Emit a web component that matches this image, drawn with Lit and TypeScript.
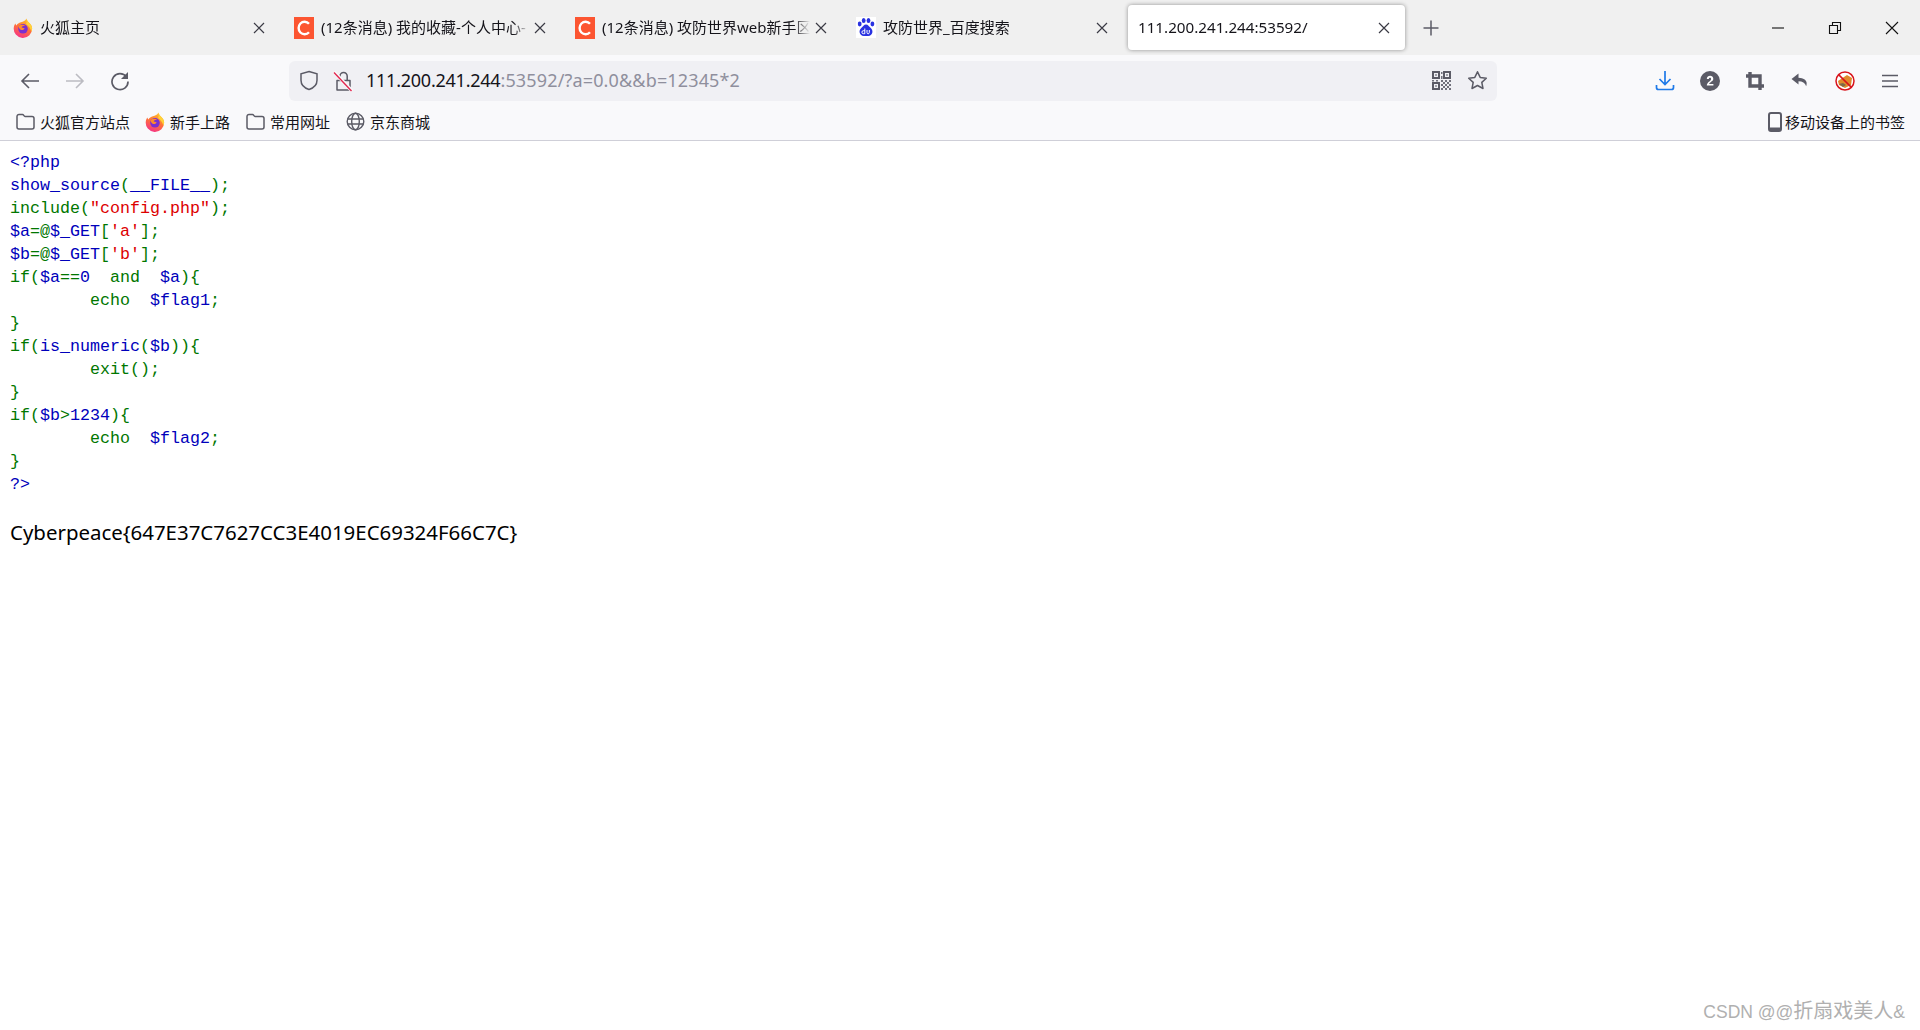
import { LitElement, html, css, svg } from "lit";
import { customElement } from "lit/decorators.js";

type Tok = [string, string];
const K = "k", D = "d", S = "s";
const CODE: Tok[][] = [
  [["<?php", D]],
  [["show_source", D], ["(", K], ["__FILE__", D], [");", K]],
  [["include", K], ["(", K], ['"config.php"', S], [");", K]],
  [["$a", D], ["=@", K], ["$_GET", D], ["[", K], ["'a'", S], ["];", K]],
  [["$b", D], ["=@", K], ["$_GET", D], ["[", K], ["'b'", S], ["];", K]],
  [["if(", K], ["$a", D], ["==", K], ["0", D], ["  and  ", K], ["$a", D], ["){", K]],
  [["        echo  ", K], ["$flag1", D], [";", K]],
  [["}", K]],
  [["if(", K], ["is_numeric", D], ["(", K], ["$b", D], ["))", K], ["{", K]],
  [["        exit", K], ["();", K]],
  [["}", K]],
  [["if(", K], ["$b", D], [">", K], ["1234", D], ["){", K]],
  [["        echo  ", K], ["$flag2", D], [";", K]],
  [["}", K]],
  [["?>", D]],
];

let gid = 0;
const firefox = () => {
  const id = `ff${gid++}`;
  return html`<svg class="ic" width="20" height="20" viewBox="0 0 20 20">
    <defs>
      <linearGradient id="${id}" x1="0.7" y1="0.1" x2="0.3" y2="1">
        <stop offset="0" stop-color="#ffb62e"/><stop offset="0.45" stop-color="#ff7139"/><stop offset="1" stop-color="#f5318a"/>
      </linearGradient>
    </defs>
    <path d="M13.5 0.5c.3 1.8 1.2 3 2.6 4.2 1.7 1.5 3 3.1 3 5.6a9.2 9.2 0 1 1-18.3-.9c.2-1.6.8-3 1.7-4 .1 1 .4 1.6 1 2.2.8-1.8 2.4-2.9 4.4-3.3 2.2-.5 4.5-1.500 5.600-3.800z" fill="url(#${id})"/>
    <path d="M13.500 .5c.3 1.800 1.200 3 2.600 4.200 1.700 1.500 3 3.100 3 5.600 0 1.200-.2 2.200-.7 3.200-.8-3.500-2.900-5.500-5.400-7.500 1-1.600 .8-3.900 .5-5.500z" fill="#ffd23a"/>
    <circle cx="10" cy="10.800" r="4.800" fill="#7b2fd0"/>
    <path d="M5.800 8.200c1.500-1.600 4.700-1.800 6.600-.4-1.900-.3-3.500.5-3.700 1.600l2.900.9c-.4 1.600-2.500 2.300-4 1.400-1.200-.7-1.900-2-1.800-3.500z" fill="#ff8a2b"/>
  </svg>`;
};
const csdn = () => html`<svg class="ic" width="20" height="22" viewBox="0 0 20 22">
  <rect width="20" height="22" fill="#fc5531"/>
  <path d="M15 6.700a6 6.300 0 1 0 0 8.600" fill="none" stroke="#fff" stroke-width="2.400"/>
</svg>`;
const baidu = () => html`<svg class="ic" width="20" height="21" viewBox="0 0 20 21">
  <rect width="20" height="21" fill="#fff"/>
  <g fill="#2932e1">
    <ellipse cx="3.700" cy="7" rx="1.900" ry="2.400"/>
    <ellipse cx="7.700" cy="3.400" rx="1.900" ry="2.500"/>
    <ellipse cx="12.500" cy="3.400" rx="1.900" ry="2.500"/>
    <ellipse cx="16.400" cy="7" rx="1.900" ry="2.400"/>
    <path d="M10 7.500c2.200 0 3 2 4.500 3.300 1.800 1.500 2.200 3.400 1.800 5-.5 2-2 3.200-4 3.200H7.700c-2 0-3.500-1.200-4-3.200-.4-1.600 0-3.500 1.800-5C7 9.500 7.800 7.500 10 7.500z"/>
  </g>
  <path d="M8.800 11.500v5.200M8.800 13.700H7.400a1.500 1.500 0 0 0 0 3h1.400M11 13v2.600c0 1.600 2.300 1.600 2.300 0V13" fill="none" stroke="#fff" stroke-width="1"/>
</svg>`;
const closeX = svg`<path d="M3 3l10 10M13 3L3 13" fill="none" stroke="currentColor" stroke-width="1.200"/>`;
const folder = html`<svg class="ic" width="19" height="19" viewBox="0 0 19 19"><path d="M1 4.500a2 2 0 0 1 2-2h3.600c1 0 1.300 1.900 2.400 1.900H16a2 2 0 0 1 2 2V15a2 2 0 0 1-2 2H3a2 2 0 0 1-2-2z" fill="none" stroke="#5b5b66" stroke-width="1.500"/></svg>`;
const globe = html`<svg class="ic" width="19" height="19" viewBox="0 0 19 19"><g fill="none" stroke="#5b5b66" stroke-width="1.400"><circle cx="9.500" cy="9.500" r="8.300"/><ellipse cx="9.500" cy="9.500" rx="3.800" ry="8.300"/><path d="M1.500 7h16M1.500 12h16"/></g></svg>`;

const TABS = [
  { icon: firefox, title: "火狐主页" },
  { icon: csdn, title: "(12条消息) 我的收藏-个人中心-" },
  { icon: csdn, title: "(12条消息) 攻防世界web新手区" },
  { icon: baidu, title: "攻防世界_百度搜索" },
  { icon: null, title: "111.200.241.244:53592/", active: true },
];

@customElement("app-root")
export class AppRoot extends LitElement {
  static styles = css`
    :host { display: block; height: 1030px; background: #fff; overflow: hidden; position: relative;
      font-family: "Noto Sans", "Noto Sans CJK SC", sans-serif; color: #15141a; }
    .ic { display: block; flex: none; }
    .tabbar { height: 55px; background: #f0f0f0; display: flex; align-items: flex-start; padding-left: 4px; gap: 4px; box-sizing: border-box; padding-top: 5px; }
    .tab { width: 277px; height: 45px; flex: none; box-sizing: border-box; display: flex; align-items: center; padding: 0 14px 0 9px; font-size: 15px; border-radius: 4px; }
    .tab .ic:first-child { margin-right: 7px; }
    .tab.active { background: #fff; box-shadow: 0 0 4px rgba(0,0,0,.4); padding: 0 13px 0 10px; font-size: 15.200px; }
    .title { flex: 1; min-width: 0; overflow: hidden; white-space: nowrap; padding-bottom: 2px; -webkit-mask-image: linear-gradient(to left, transparent 0, #000 16px); mask-image: linear-gradient(to left, transparent 0, #000 16px); }
    .tab .x { color: #3a3a44; flex: none; margin-left: 3px; }
    .newtab { width: 44px; height: 45px; flex: none; display: flex; align-items: center; justify-content: center; color: #5b5b66; }
    .spacer { flex: 1; }
    .win { display: flex; align-items: center; margin-top: -5px; height: 55px; }
    .win span { width: 57px; display: flex; justify-content: center; }
    .toolbar { height: 48px; background: #f9f9fb; display: flex; align-items: center; padding: 3px 8px 0 7px; box-sizing: border-box; }
    .btn { width: 45px; height: 45px; flex: none; display: flex; align-items: center; justify-content: center; }
    .gap { width: 147px; flex: none; }
    .url { width: 1208px; height: 40px; flex: none; background: #f0f0f4; border-radius: 6px; display: flex; align-items: center; box-sizing: border-box; padding: 0 0 0 10px; }
    .url .lead { display: flex; width: 67px; flex: none; gap: 14px; align-items: center; }
    .addr { font-size: 18px; white-space: nowrap; color: #8f8f9d; flex: 1; letter-spacing: .15px; padding-bottom: 1px; }
    .addr b { font-weight: 400; color: #15141a; letter-spacing: -.24px; }
    .url .end { display: flex; gap: 16px; align-items: center; padding-right: 9px; }
    .bm { background: #f9f9fb; display: flex; align-items: center; padding: 0 15px 0 16px; gap: 16px; border-bottom: 1px solid #cfcfd8; box-sizing: border-box; height: 38px; font-size: 15px; }
    .bm .item { display: flex; align-items: center; gap: 5px; white-space: nowrap; }
    .bm .item:first-child { margin-right: -1px; }
    .bm .mobile { margin-left: auto; gap: 3px; }
    main { padding: 10px 0 0 10px; }
    .code { font-family: "Liberation Mono", monospace; font-size: 16.667px; line-height: 23px; white-space: pre; }
    .k { color: #007700; } .d { color: #0000bb; } .s { color: #dd0000; }
    .flag { font-size: 20.450px; line-height: 30px; margin-top: 21px; color: #000; white-space: nowrap; }
    .wm { position: absolute; right: 15px; bottom: 6px; font-family: "Liberation Sans", "Noto Sans CJK SC", sans-serif; font-size: 20px; color: #b0b0b0; white-space: nowrap; }
    .wm span { font-size: 17.500px; }
  `;

  render() {
    return html`
      <div class="tabbar">
        ${TABS.map((t) => html`
          <div class="tab ${t.active ? "active" : ""}">
            ${t.icon ? t.icon() : ""}
            <div class="title">${t.title}</div>
            <svg class="ic x" width="16" height="16" viewBox="0 0 16 16">${closeX}</svg>
          </div>`)}
        <div class="newtab"><svg class="ic" width="18" height="18" viewBox="0 0 18 18"><path d="M9 1.500v15M1.500 9h15" stroke="currentColor" stroke-width="1.500" fill="none"/></svg></div>
        <div class="spacer"></div>
        <div class="win">
          <span><svg class="ic" width="14" height="14" viewBox="0 0 14 14"><path d="M1 7h12" stroke="#111" stroke-width="1.100"/></svg></span>
          <span><svg class="ic" width="14" height="14" viewBox="0 0 14 14"><path d="M1.500 4.500h8v8h-8zM4.500 4.500v-3h8v8h-3" fill="none" stroke="#111" stroke-width="1.100"/></svg></span>
          <span><svg class="ic" width="14" height="14" viewBox="0 0 14 14"><path d="M1 1l12 12M13 1L1 13" fill="none" stroke="#111" stroke-width="1.100"/></svg></span>
        </div>
      </div>
      <div class="toolbar">
        <div class="btn"><svg class="ic" width="20" height="20" viewBox="0 0 20 20"><path d="M19 10H2M9 3l-7 7 7 7" fill="none" stroke="#5b5b66" stroke-width="1.600"/></svg></div>
        <div class="btn"><svg class="ic" width="20" height="20" viewBox="0 0 20 20"><path d="M1 10h17M11 3l7 7-7 7" fill="none" stroke="#bcbcc2" stroke-width="1.600"/></svg></div>
        <div class="btn"><svg class="ic" width="20" height="20" viewBox="0 0 20 20"><path d="M16.500 6A8 8 0 1 0 18 10.500" fill="none" stroke="#5b5b66" stroke-width="1.700"/><path d="M18 1v7h-7z" fill="#5b5b66"/></svg></div>
        <div class="gap"></div>
        <div class="url">
          <div class="lead">
            <svg class="ic" width="20" height="21" viewBox="0 0 20 21"><path d="M10 1.500l8 2.300v6.500c0 4.600-3.500 7.800-8 9.200-4.500-1.400-8-4.600-8-9.200V3.800z" fill="none" stroke="#5b5b66" stroke-width="1.500"/></svg>
            <svg class="ic" width="20" height="22" viewBox="0 0 20 22"><path d="M7 10V6a3.600 3.600 0 0 1 7.200 0v4M4 10.500h13v9.500H4z" fill="none" stroke="#5b5b66" stroke-width="1.500" stroke-linejoin="round"/><path d="M1 2l18 19" stroke="#f9f9fb" stroke-width="3.500"/><path d="M1 2.500l17.500 18.500" stroke="#e22850" stroke-width="1.400"/></svg>
          </div>
          <div class="addr"><b>111.200.241.244</b>:53592/?a=0.0&&b=12345*2</div>
          <div class="end">
            <svg class="ic" width="19" height="19" viewBox="0 0 19 19"><path fill="#5b5b66" fill-rule="evenodd" d="M0 0h8v8H0zM2 2v4h4V2zM11 0h8v8h-8zM13 2v4h4V2zM0 11h8v8H0zM2 13v4h4v-4zM3.300 3.300h1.400v1.400H3.300zM14.300 3.300h1.400v1.400h-1.400zM3.300 14.300h1.400v1.400H3.300z"/><path fill="#5b5b66" opacity=".85" d="M9 1h1.500v2H9zM9 5h1.500v3H9zM0 9h2v1.500H0zM4 9h2v1.500H4zM9 9h2v2H9zM13 9h2v2h-2zM17 9h2v2h-2zM9 13h2v2H9zM11 11h2v2h-2zM15 11h2v2h-2zM13 13h2v2h-2zM17 13h2v2h-2zM11 15h2v2h-2zM15 15h2v2h-2zM9 17h2v2H9zM13 17h2v2h-2zM17 17h2v2h-2z"/></svg>
            <svg class="ic" width="21" height="21" viewBox="0 0 21 21"><path d="M10.500 1.800l2.700 5.600 6.100.8-4.500 4.200 1.200 6.100-5.500-3-5.500 3 1.200-6.100L1.700 8.200l6.100-.8z" fill="none" stroke="#5b5b66" stroke-width="1.500" stroke-linejoin="round"/></svg>
          </div>
        </div>
        <div class="spacer"></div>
        <div class="btn"><svg class="ic" width="20" height="21" viewBox="0 0 20 21"><path d="M10 1v13M4.500 9l5.500 5.500L15.500 9M1.500 15v2.500a2 2 0 0 0 2 2h13a2 2 0 0 0 2-2V15" fill="none" stroke="#1f7ae8" stroke-width="1.700"/></svg></div>
        <div class="btn"><svg class="ic" width="20" height="20" viewBox="0 0 20 20"><circle cx="10" cy="10" r="10" fill="#5b5b66"/><path d="M6.800 8c.1-4.200 6.500-4.100 6.500-.2 0 2.600-3.600 3.300-4.200 5.100h4.300v1.700H6.800c0-3.700 4.300-4.300 4.300-6.700 0-1.600-2.200-1.500-2.300.1z" fill="#fff"/></svg></div>
        <div class="btn"><svg class="ic" width="18" height="18" viewBox="0 0 18 18"><path d="M4 0v14h14M0 4h14v14" fill="none" stroke="#5b5b66" stroke-width="3.400"/></svg></div>
        <div class="btn"><svg class="ic" width="18" height="18" viewBox="0 0 18 18"><path d="M7.500 1.500L0.500 7l7 5.500V9.300c4 0 6.500 1.500 7.700 5 .4-1.100 2.800-8-7.700-8.600z" fill="#5b5b66"/></svg></div>
        <div class="btn"><svg class="ic" width="20" height="20" viewBox="0 0 20 20"><circle cx="10" cy="10" r="9" fill="#fff"/><path d="M3 10l9-6 5 3-1 7-6 3-6-3z" fill="#e08a2c"/><path d="M4 13l4-1 3 2-3 2z" fill="#7a6a4a"/><circle cx="10" cy="10" r="9" fill="none" stroke="#d8141c" stroke-width="1.500"/><path d="M3.600 3.600l12.800 12.800" stroke="#d8141c" stroke-width="1.500"/></svg></div>
        <div class="btn"><svg class="ic" width="16" height="14" viewBox="0 0 16 14"><path d="M0 1.500h16M0 7h16M0 12.500h16" stroke="#5b5b66" stroke-width="1.500"/></svg></div>
      </div>
      <div class="bm">
        <div class="item">${folder}<span>火狐官方站点</span></div>
        <div class="item">${firefox()}<span>新手上路</span></div>
        <div class="item">${folder}<span>常用网址</span></div>
        <div class="item">${globe}<span>京东商城</span></div>
        <div class="item mobile">
          <svg class="ic" width="14" height="20" viewBox="0 0 14 20"><rect x="1" y="1" width="12" height="18" rx="2" fill="none" stroke="#5b5b66" stroke-width="2"/><path d="M1 15.500h12V17a2 2 0 0 1-2 2H3a2 2 0 0 1-2-2z" fill="#5b5b66"/></svg>
          <span>移动设备上的书签</span>
        </div>
      </div>
      <main>
        <div class="code">${CODE.map((line) => html`<div>${line.map(([t, c]) => html`<span class=${c}>${t}</span>`)}</div>`)}</div>
        <div class="flag">Cyberpeace{647E37C7627CC3E4019EC69324F66C7C}</div>
      </main>
      <div class="wm"><span>CSDN @@</span>折扇戏美人<span>&</span></div>
    `;
  }
}
